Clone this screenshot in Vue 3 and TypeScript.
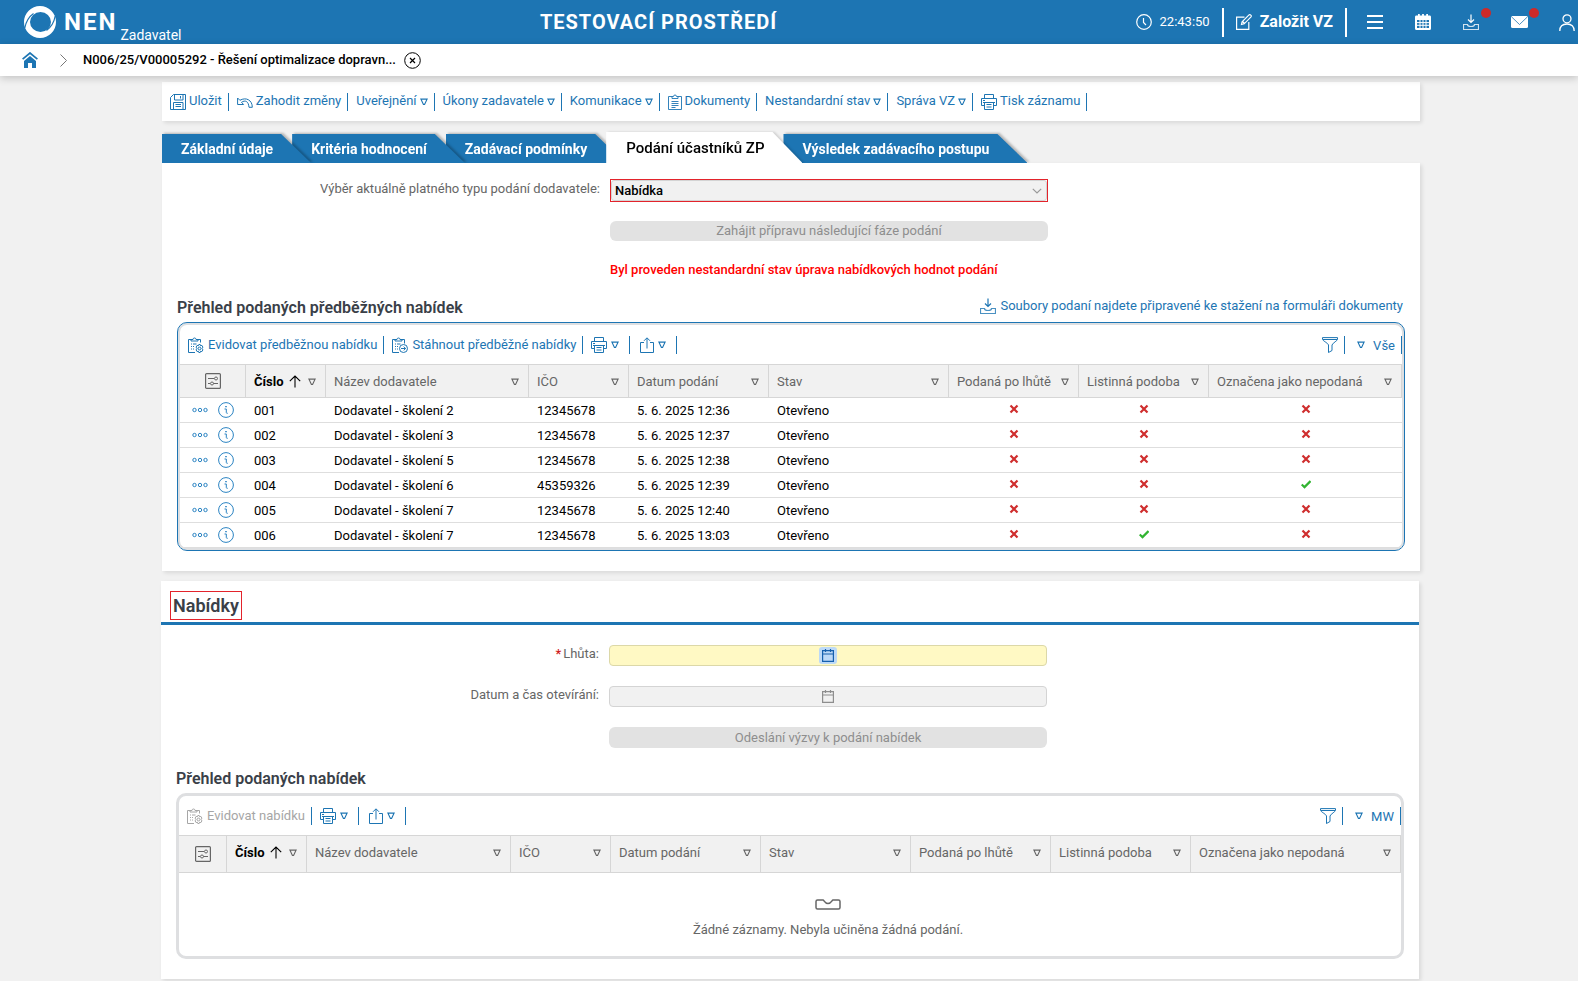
<script setup lang="ts">
import { ref } from 'vue'

interface MenuItem {
  label: string
  icon?: string
  menu?: boolean
}

interface Column {
  key: string
  label: string
  width?: number
  sorted?: boolean
}

interface Submission {
  no: string
  supplier: string
  ico: string
  date: string
  state: string
  late: boolean
  paper: boolean
  withdrawn: boolean
}

const menu: MenuItem[] = [
  { label: 'Uložit', icon: 'save' },
  { label: 'Zahodit změny', icon: 'undo' },
  { label: 'Uveřejnění', menu: true },
  { label: 'Úkony zadavatele', menu: true },
  { label: 'Komunikace', menu: true },
  { label: 'Dokumenty', icon: 'clipboard' },
  { label: 'Nestandardní stav', menu: true },
  { label: 'Správa VZ', menu: true },
  { label: 'Tisk záznamu', icon: 'print' },
]

const tabs = [
  'Základní údaje',
  'Kritéria hodnocení',
  'Zadávací podmínky',
  'Podání účastníků ZP',
  'Výsledek zadávacího postupu',
]
const activeTab = ref(3)

const makeColumns = (widths: number[]): Column[] => [
  { key: 'no', label: 'Číslo', width: widths[0], sorted: true },
  { key: 'supplier', label: 'Název dodavatele', width: widths[1] },
  { key: 'ico', label: 'IČO', width: widths[2] },
  { key: 'date', label: 'Datum podání', width: widths[3] },
  { key: 'state', label: 'Stav', width: widths[4] },
  { key: 'late', label: 'Podaná po lhůtě', width: widths[5] },
  { key: 'paper', label: 'Listinná podoba', width: widths[6] },
  { key: 'withdrawn', label: 'Označena jako nepodaná' },
]
const preliminaryColumns = makeColumns([80, 203, 100, 140, 180, 130, 130])
const offerColumns = makeColumns([80, 204, 100, 150, 150, 140, 140])

const row = (
  no: string,
  supplier: string,
  ico: string,
  time: string,
  paper = false,
  withdrawn = false,
): Submission => ({
  no,
  supplier: `Dodavatel - školení ${supplier}`,
  ico,
  date: `5. 6. 2025 ${time}`,
  state: 'Otevřeno',
  late: false,
  paper,
  withdrawn,
})
const rows: Submission[] = [
  row('001', '2', '12345678', '12:36'),
  row('002', '3', '12345678', '12:37'),
  row('003', '5', '12345678', '12:38'),
  row('004', '6', '45359326', '12:39', false, true),
  row('005', '7', '12345678', '12:40'),
  row('006', '7', '12345678', '13:03', true),
]

const submissionType = ref('Nabídka')
const deadline = ref('')
const openingDate = ref('')
</script>

<template>
  <svg class="sprite" aria-hidden="true">
    <symbol id="i-tri" viewBox="0 0 8 8"><path d="M.9 1.100h6.200L4.600 6.400H3.400z" fill="none" stroke="currentColor" stroke-width="1.100" /></symbol>
    <symbol id="i-save" viewBox="0 0 16 16"><path d="M3.500.5h12v15H.5v-12zM4.500.5v5.500h8.500v-5.500M10.500 2v2.500M3.500 15.500v-7h9.500v7M5.500 10.500h5.500M5.500 12.500h5.500" fill="none" stroke="currentColor" /></symbol>
    <symbol id="i-undo" viewBox="0 0 16 16"><path d="M.6 4v6.500h6L4.500 8.300C8 5.800 11.500 7 12 13.300h3.300C15.300 6 9 2.800 2.900 6.300z" fill="none" stroke="currentColor" stroke-linejoin="round" /></symbol>
    <symbol id="i-clipboard" viewBox="0 0 14 16"><path d="M4 2.500H.5v13h13v-13H10M4 4.500v-2h1.500a1.500 1.500 0 0 1 3 0H10v2zM3.500 7.500h7M3.500 9.500h7M3.500 11.500h7M3.500 13.500h4" fill="none" stroke="currentColor" stroke-width=".9" /></symbol>
    <symbol id="i-print" viewBox="0 0 16 16"><path d="M3.500 4.500v-4h9v4M3.500 11.500h-3v-7h15v7h-3M3.500 8.500h9v7h-9zM2 6.500h2M5.500 10.500h5M5.500 13h5M2 8.500h12" fill="none" stroke="currentColor" /></symbol>
    <symbol id="i-clipgear" viewBox="0 0 16 16"><g fill="none" stroke="currentColor"><path d="M3 2.500H.5v13H7M10 2.500h2.500v3M3 4V2.500h2a1.500 1.500 0 0 1 3 0h2V4zM3 7h1M5 7h3.500M3 9.500h1M5 9.500h1M3 12h1M5 12h1" /><circle cx="11.500" cy="11.500" r="1.400" /><path d="M10.800 7.500h1.400l.4 1.300 1.300-.4 1 1.700-.8 1.400.8 1.400-1 1.700-1.300-.4-.4 1.300h-1.400l-.4-1.300-1.300.4-1-1.700.8-1.400-.8-1.400 1-1.700 1.300.4z" /></g></symbol>
    <symbol id="i-cliparrow" viewBox="0 0 16 16"><g fill="none" stroke="currentColor"><path d="M3 2.500H.5v13H7M10 2.500h2.500v4M3 4V2.500h2a1.500 1.500 0 0 1 3 0h2V4zM3 7h1M5 7h3.500M3 9.500h1M5 9.500h1M3 12h1M5 12h1" /><circle cx="11.500" cy="11.500" r="4" /><path d="M9 11.500h4.500M11.700 9.600l1.900 1.900-1.900 1.900" /></g></symbol>
    <symbol id="i-share" viewBox="0 0 14 16"><path d="M4 5.500H.500v10h13v-10H10M7 11.500V1M4 3.800L7 .8l3 3" fill="none" stroke="currentColor" /></symbol>
    <symbol id="i-download" viewBox="0 0 16 16"><path d="M8 .5v7.500M5 5.500l3 3 3-3" fill="none" stroke="currentColor" stroke-width="1.200" /><path d="M4.500 10.500h-4v5h15v-5h-4c0 1.500-1.500 2-3.500 2s-3.500-.5-3.500-2z" fill="none" stroke="currentColor" stroke-width="1.200" opacity=".8" /></symbol>
    <symbol id="i-funnel" viewBox="0 0 16 16"><path d="M.5.600h15v1.400c0 2-4.500 3.500-5.500 6v5.500l-3.500 2V8C5.500 5.500.500 4 .500 2zM1 2.500h14" fill="none" stroke="currentColor" /></symbol>
    <symbol id="i-settings" viewBox="0 0 16 16"><g fill="none" stroke="currentColor"><rect x=".6" y=".6" width="14.800" height="14.800" rx="1" stroke-width="1.200" /><path d="M3 5.500h6M3 10.500h2M8.500 10.500H13" /><circle cx="11" cy="5.500" r="1.500" /><circle cx="7" cy="10.500" r="1.500" /></g></symbol>
    <symbol id="i-up" viewBox="0 0 12 13"><path d="M6 12.500V1.200M.8 6.200L6 1l5.200 5.200" fill="none" stroke="currentColor" stroke-width="1.100" /></symbol>
    <symbol id="i-dots" viewBox="0 0 16 6"><g fill="none" stroke="currentColor"><circle cx="2.500" cy="3" r="1.700" /><circle cx="8" cy="3" r="1.700" /><circle cx="13.500" cy="3" r="1.700" /></g></symbol>
    <symbol id="i-info" viewBox="0 0 16 16"><circle cx="8" cy="8" r="7.400" fill="none" stroke="currentColor" /><path d="M7.200 4.600h1.600" stroke="currentColor" stroke-width="1.400" /><path d="M6.500 7h1.800v3.500q0 1 1.400.8" fill="none" stroke="currentColor" /></symbol>
    <symbol id="i-no" viewBox="0 0 10 10"><path d="M1.500 1.500l7 7M8.500 1.500l-7 7" stroke="currentColor" stroke-width="2.200" /></symbol>
    <symbol id="i-yes" viewBox="0 0 10 10"><path d="M.7 5.500l2.800 2.600 6-6" fill="none" stroke="currentColor" stroke-width="2.200" /></symbol>
    <symbol id="i-cal" viewBox="0 0 12 13"><path d="M.6 1.600h10.800v10.800H.6zM.6 5h10.800M3.500 0v3M8.500 0v3" fill="none" stroke="currentColor" stroke-width="1.200" /></symbol>
    <symbol id="i-empty" viewBox="0 0 26 11"><path d="M2.500 1h5.500c1.200 0 1.500 3.500 5 3.500s3.800-3.500 5-3.500h5.500q1.500 0 1.500 1.500v6q0 1.500-1.500 1.500h-21q-1.500 0-1.500-1.500v-6q0-1.500 1.500-1.500z" fill="none" stroke="currentColor" stroke-width="1.500" /></symbol>
  </svg>

  <header class="topbar">
    <a class="brand" href="#">
      <svg class="logo" viewBox="0 0 32 32" aria-hidden="true">
        <path fill-rule="evenodd" d="M16 0a16 16 0 1 1 0 32a16 16 0 0 1 0-32zM16.500 6a10.500 10 0 1 0 0 20a10.500 10 0 0 0 0-20z" fill="#fff" />
        <path d="M.8 22Q2.500 12.500 9.500 7.500M31.200 10Q29.500 19.500 22.500 24.500" fill="none" stroke="#1d75b3" stroke-width="1.200" />
      </svg>
      <span class="name">NEN</span>
      <span class="role">Zadavatel</span>
    </a>
    <div class="env">TESTOVACÍ PROSTŘEDÍ</div>
    <div class="tools">
      <span class="clock">
        <svg width="16" height="16" viewBox="0 0 16 16" aria-hidden="true"><circle cx="8" cy="8" r="7.300" fill="none" stroke="currentColor" stroke-width="1.200" /><path d="M7.500 4v4.500L10 11" fill="none" stroke="currentColor" stroke-width="1.200" /></svg>
        22:43:50
      </span>
      <button class="create" type="button">
        <svg width="16" height="16" viewBox="0 0 16 16" aria-hidden="true"><path d="M8.500 3.200H.6v12.200h12.200V8M5.500 10.500l.6-2.800L13 .9q.8-.6 1.500 0l.5.500q.6.700 0 1.400L8.200 9.800zM6.500 7.500l2 2" fill="none" stroke="currentColor" stroke-width="1.200" /></svg>
        Založit VZ
      </button>
      <nav class="shortcuts" aria-label="Zkratky">
        <button type="button" aria-label="Menu"><svg width="16" height="14" viewBox="0 0 16 14"><path d="M0 1h16M0 7h16M0 13h16" stroke="currentColor" stroke-width="2" /></svg></button>
        <button type="button" aria-label="Kalendář"><svg width="16" height="16" viewBox="0 0 16 16"><path fill-rule="evenodd" fill="currentColor" d="M1 1.500H3V0h1.800v1.500h2.300V0h1.800v1.500h2.300V0H13v1.500h2Q16 1.500 16 3v11.500q0 1.500-1.500 1.500h-13Q0 16 0 14.500V3q0-1.500 1-1.500zM2 6v8h12V6z" /><path d="M2 8.600h12M2 11.300h12M5 6v8M8 6v8M11 6v8" stroke="currentColor" /></svg></button>
        <button type="button" aria-label="Stahování"><svg width="16" height="16"><use href="#i-download" /></svg><i class="dot"></i></button>
        <button type="button" aria-label="Zprávy"><svg width="17" height="12" viewBox="0 0 17 12"><rect width="17" height="12" rx="1.500" fill="currentColor" /><path d="M.5.800l8 7.700 8-7.700" fill="none" stroke="#1d75b3" stroke-width=".8" /></svg><i class="dot"></i></button>
        <button type="button" aria-label="Uživatel"><svg width="16" height="17" viewBox="0 0 16 17"><circle cx="8" cy="4.800" r="4" fill="none" stroke="currentColor" stroke-width="1.300" /><path d="M.8 17c0-4.500 2.700-7 7.200-7s7.200 2.500 7.200 7" fill="none" stroke="currentColor" stroke-width="1.300" /></svg></button>
      </nav>
    </div>
  </header>

  <nav class="crumbs" aria-label="Drobečková navigace">
    <a class="home" href="#" aria-label="Domů"><svg width="16" height="16" viewBox="0 0 16 16"><path d="M.6 7.200L8 1l7.400 6.200" fill="none" stroke="currentColor" stroke-width="1.700" /><path d="M2 9l6-5 6 5v7h-4v-5H6v5H2z" fill="currentColor" /></svg></a>
    <svg class="sep" width="7" height="13" viewBox="0 0 7 13" aria-hidden="true"><path d="M.5.500l6 6-6 6" fill="none" stroke="currentColor" /></svg>
    <a class="record" href="#">N006/25/V00005292 - Řešení optimalizace dopravn...</a>
    <button class="close" type="button" aria-label="Zavřít"><svg width="17" height="17" viewBox="0 0 17 17"><circle cx="8.500" cy="8.500" r="7.800" fill="none" stroke="currentColor" /><path d="M6 6l5 5M11 6l-5 5" stroke="currentColor" stroke-width="1.200" /></svg></button>
  </nav>

  <main class="page">
    <div class="card actions">
      <button v-for="item in menu" :key="item.label" class="action" type="button">
        <svg v-if="item.icon" :width="item.icon === 'clipboard' ? 14 : 16" height="16"><use :href="`#i-${item.icon}`" /></svg>
        <span>{{ item.label }}</span>
        <svg v-if="item.menu" class="tri" width="8" height="8"><use href="#i-tri" /></svg>
      </button>
    </div>

    <div class="tabs" role="tablist">
      <div
        v-for="(tab, i) in tabs"
        :key="tab"
        class="tab"
        :class="{ active: i === activeTab }"
        :style="{ zIndex: i === activeTab ? 10 : 9 - i }"
      >
        <button type="button" role="tab" :aria-selected="i === activeTab" @click="activeTab = i">{{ tab }}</button>
      </div>
    </div>

    <section class="card first">
      <div class="form">
        <label for="type">Výběr aktuálně platného typu podání dodavatele:</label>
        <div class="marked">
          <select id="type" v-model="submissionType">
            <option>Nabídka</option>
          </select>
          <svg class="chevron" width="10" height="6" viewBox="0 0 10 6" aria-hidden="true"><path d="M.8.800L5 5 9.200.800" fill="none" stroke="currentColor" stroke-width="1.200" /></svg>
        </div>
        <button class="wide" type="button" disabled>Zahájit přípravu následující fáze podání</button>
        <p class="warning">Byl proveden nestandardní stav úprava nabídkových hodnot podání</p>
      </div>

      <div class="heading">
        <h2>Přehled podaných předběžných nabídek</h2>
        <a href="#"><svg width="16" height="16" aria-hidden="true"><use href="#i-download" /></svg>Soubory podaní najdete připravené ke stažení na formuláři dokumenty</a>
      </div>

      <div class="frame selected">
        <div class="gridbar">
          <button class="action" type="button"><svg width="16" height="16"><use href="#i-clipgear" /></svg>Evidovat předběžnou nabídku</button>
          <button class="action" type="button"><svg width="16" height="16"><use href="#i-cliparrow" /></svg>Stáhnout předběžné nabídky</button>
          <button class="action short" type="button" aria-label="Tisk"><svg width="16" height="16"><use href="#i-print" /></svg><svg class="tri" width="8" height="8"><use href="#i-tri" /></svg></button>
          <button class="action short export" type="button" aria-label="Export"><svg width="14" height="16"><use href="#i-share" /></svg><svg class="tri" width="8" height="8"><use href="#i-tri" /></svg></button>
          <span class="fill"></span>
          <button class="action" type="button" aria-label="Filtr"><svg width="16" height="16"><use href="#i-funnel" /></svg></button>
          <button class="action view" type="button"><svg class="tri" width="8" height="8"><use href="#i-tri" /></svg><span>Vše</span></button>
        </div>
        <table>
          <colgroup>
            <col class="c-tools" />
            <col v-for="c in preliminaryColumns" :key="c.key" :style="{ width: c.width ? c.width + 'px' : 'auto' }" />
          </colgroup>
          <thead>
            <tr>
              <th class="tools-cell"><button type="button" aria-label="Nastavení sloupců"><svg width="16" height="16"><use href="#i-settings" /></svg></button></th>
              <th v-for="c in preliminaryColumns" :key="c.key" :class="{ sorted: c.sorted }">
                <div>{{ c.label }}<svg v-if="c.sorted" width="12" height="13"><use href="#i-up" /></svg><svg class="tri" width="8" height="8"><use href="#i-tri" /></svg></div>
              </th>
            </tr>
          </thead>
          <tbody>
            <tr v-for="r in rows" :key="r.no">
              <td class="row-tools">
                <div>
                  <button type="button" aria-label="Akce"><svg width="16" height="6"><use href="#i-dots" /></svg></button>
                  <button type="button" aria-label="Detail"><svg width="16" height="16"><use href="#i-info" /></svg></button>
                </div>
              </td>
              <td>{{ r.no }}</td>
              <td>{{ r.supplier }}</td>
              <td>{{ r.ico }}</td>
              <td>{{ r.date }}</td>
              <td>{{ r.state }}</td>
              <td v-for="(flag, i) in [r.late, r.paper, r.withdrawn]" :key="i" class="flag" :class="{ yes: flag }">
                <svg width="10" height="10" role="img" :aria-label="flag ? 'Ano' : 'Ne'"><use :href="flag ? '#i-yes' : '#i-no'" /></svg>
              </td>
            </tr>
          </tbody>
        </table>
      </div>
    </section>

    <section class="card offers">
      <h1><span>Nabídky</span></h1>
      <div class="form">
        <label for="deadline"><b>*</b>Lhůta:</label>
        <div class="date required">
          <input id="deadline" v-model="deadline" type="text" />
          <button type="button" aria-label="Vybrat datum lhůty"><svg width="12" height="13"><use href="#i-cal" /></svg></button>
        </div>
        <label for="opening">Datum a čas otevírání:</label>
        <div class="date">
          <input id="opening" v-model="openingDate" type="text" disabled />
          <button type="button" disabled aria-label="Vybrat datum otevírání"><svg width="12" height="13"><use href="#i-cal" /></svg></button>
        </div>
        <button class="wide" type="button" disabled>Odeslání výzvy k podání nabídek</button>
      </div>

      <div class="heading"><h2>Přehled podaných nabídek</h2></div>

      <div class="frame">
        <div class="gridbar">
          <button class="action" type="button" disabled><svg width="16" height="16"><use href="#i-clipgear" /></svg>Evidovat nabídku</button>
          <button class="action short" type="button" aria-label="Tisk"><svg width="16" height="16"><use href="#i-print" /></svg><svg class="tri" width="8" height="8"><use href="#i-tri" /></svg></button>
          <button class="action short export" type="button" aria-label="Export"><svg width="14" height="16"><use href="#i-share" /></svg><svg class="tri" width="8" height="8"><use href="#i-tri" /></svg></button>
          <span class="fill"></span>
          <button class="action" type="button" aria-label="Filtr"><svg width="16" height="16"><use href="#i-funnel" /></svg></button>
          <button class="action view" type="button"><svg class="tri" width="8" height="8"><use href="#i-tri" /></svg><span>MW</span></button>
        </div>
        <table class="tall">
          <colgroup>
            <col class="c-tools" />
            <col v-for="c in offerColumns" :key="c.key" :style="{ width: c.width ? c.width + 'px' : 'auto' }" />
          </colgroup>
          <thead>
            <tr>
              <th class="tools-cell"><button type="button" aria-label="Nastavení sloupců"><svg width="16" height="16"><use href="#i-settings" /></svg></button></th>
              <th v-for="c in offerColumns" :key="c.key" :class="{ sorted: c.sorted }">
                <div>{{ c.label }}<svg v-if="c.sorted" width="12" height="13"><use href="#i-up" /></svg><svg class="tri" width="8" height="8"><use href="#i-tri" /></svg></div>
              </th>
            </tr>
          </thead>
        </table>
        <div class="empty">
          <svg width="26" height="11" aria-hidden="true"><use href="#i-empty" /></svg>
          <p>Žádné záznamy. Nebyla učiněna žádná podání.</p>
        </div>
      </div>
    </section>
  </main>
</template>

<style>
body {
  background: #f1f1f1;
  font: 13px/16px Roboto, "Noto Sans", sans-serif;
  color: #000;
}
</style>

<style scoped>
* {
  box-sizing: border-box;
}
button,
input,
select {
  font: inherit;
  color: inherit;
}
button {
  padding: 0;
  border: 0;
  background: none;
  cursor: pointer;
}
button:disabled {
  cursor: default;
}
a {
  color: inherit;
  text-decoration: none;
}
svg {
  flex: none;
  display: block;
}
h1,
h2,
p {
  margin: 0;
}
.sprite {
  position: absolute;
  width: 0;
  height: 0;
}

/* top bar */
.topbar {
  display: flex;
  justify-content: space-between;
  height: 44px;
  padding-left: 24px;
  background: #1d75b3;
  color: #fff;
}
.brand {
  display: flex;
  align-items: center;
}
.logo {
  width: 32px;
  height: 32px;
}
.name {
  margin-left: 8px;
  font-size: 24px;
  line-height: 28px;
  font-weight: 700;
  letter-spacing: 2px;
}
.role {
  align-self: flex-end;
  margin-left: 3px;
  font-size: 14px;
  line-height: 18px;
}
.env {
  align-self: center;
  font-size: 20px;
  line-height: 24px;
  font-weight: 700;
  letter-spacing: 1px;
}
.tools {
  display: flex;
  align-items: center;
}
.clock,
.create {
  display: flex;
  align-items: center;
  gap: 8px;
  height: 29px;
  padding-right: 12px;
  border-right: 2px solid #fff;
}
.create {
  padding-left: 12px;
  font-size: 16px;
  font-weight: 700;
}
.shortcuts {
  display: flex;
  padding-left: 4px;
  margin-right: -13px;
}
.shortcuts button {
  position: relative;
  display: grid;
  place-items: center;
  width: 48px;
  height: 44px;
}
.dot {
  position: absolute;
  top: 8px;
  right: 4px;
  width: 10px;
  height: 10px;
  border-radius: 50%;
  background: #cc2a2a;
}

/* breadcrumb */
.crumbs {
  position: relative;
  display: flex;
  align-items: center;
  height: 32px;
  padding-left: 22px;
  background: #fff;
  box-shadow: 0 2px 8px rgba(0, 0, 0, 0.2);
}
.home {
  color: #1d75b3;
}
.sep {
  margin: 0 16px 0 22px;
  color: #777;
}
.record {
  font-weight: 500;
}
.close {
  margin-left: 8px;
}

/* page frame */
.page {
  padding: 6px 158px 2px 162px;
}
.card {
  background: #fff;
  box-shadow: 2px 2px 4px rgba(0, 0, 0, 0.1);
}
.actions {
  display: flex;
  align-items: center;
  height: 39px;
}
.action {
  display: flex;
  align-items: center;
  gap: 4px;
  height: 18px;
  padding: 0 6px 0 8px;
  border-right: 1px solid #1d75b3;
  color: #1d75b3;
  white-space: nowrap;
}
.actions .action {
  gap: 3px;
}
.actions span {
  padding-bottom: 2px;
}
.action:disabled {
  color: #a6a6a6;
}

/* tabs */
.tabs {
  display: flex;
  align-items: flex-end;
  height: 42px;
  overflow: hidden;
}
.tab {
  position: relative;
  filter: drop-shadow(2px -1px 1px rgba(0, 0, 0, 0.25));
}
.tab.active {
  filter: drop-shadow(2px 0 1px rgba(0, 0, 0, 0.15));
}
.tab + .tab {
  margin-left: -19px;
}
.tab button {
  height: 29px;
  padding: 0 38px 0 19px;
  background: #1d75b3;
  color: #fff;
  font-size: 14px;
  font-weight: 700;
  clip-path: polygon(0 0, calc(100% - 30px) 0, 100% 100%, 0 100%);
}
.tab.active button {
  height: 31px;
  padding-left: 20px;
  background: #fff;
  color: #000;
  font-size: 15px;
  font-weight: 500;
}

/* first section */
.first {
  height: 408px;
  padding: 16px 15px 0;
}
.form {
  display: grid;
  grid-template-columns: 448fr 438fr 372fr;
  margin: 0 -15px;
}
.form label {
  grid-column: 1;
  padding: 2px 10px 0 0;
  text-align: right;
  color: #666;
}
.form label b {
  margin-right: 2px;
  color: #d01c1c;
  font-weight: 500;
}
.marked {
  position: relative;
  height: 23px;
  border: 1px solid #e3232b;
}
.marked select {
  display: block;
  width: 100%;
  height: 21px;
  padding: 0 3px;
  border: 1px solid #d4d4d4;
  border-radius: 3px;
  background: #f1f1f1;
  appearance: none;
  font-weight: 500;
}
.chevron {
  position: absolute;
  right: 5px;
  top: 8px;
  color: #999;
  pointer-events: none;
}
.wide {
  grid-column: 2;
  height: 20px;
  margin-top: 19px;
  border-radius: 6px;
  background: #e2e2e2;
  color: #8e8e8e;
}
.warning {
  grid-column: 2;
  margin-top: 21px;
  color: #f00;
  font-weight: 500;
  white-space: nowrap;
}
.heading {
  display: flex;
  justify-content: space-between;
  align-items: center;
  color: #1d75b3;
}
.first .heading {
  margin: 19px 0 4px;
}
.heading h2 {
  color: #3a4048;
  font-size: 16px;
  line-height: 21px;
  font-weight: 600;
}
.heading a {
  display: flex;
  align-items: center;
  gap: 4px;
  padding: 0 2px 4px 0;
}

/* data grids */
.frame {
  border: 3px solid #dedfe1;
  border-radius: 10px;
  background: #fff;
  overflow: hidden;
}
.frame.selected {
  padding: 2px;
  border: 1px solid #1d75b3;
  box-shadow: inset 0 0 0 2px #dedfe1;
}
.gridbar {
  display: flex;
  align-items: center;
  height: 39px;
}
.gridbar .fill {
  flex: 1;
}
.action.short {
  padding-right: 10px;
}
.action.export {
  padding-left: 10px;
}
.action.view {
  gap: 8px;
  padding-left: 12px;
}
.action.view span {
  padding-top: 2px;
}
table {
  width: 100%;
  table-layout: fixed;
  border-spacing: 0;
}
.c-tools {
  width: 66px;
}
.tall .c-tools {
  width: 48px;
}
th {
  height: 34px;
  padding: 0 9px 0 8px;
  border: solid #d6d6d6;
  border-width: 1px 1px 1px 0;
  background: #f1f1f1;
  color: #666;
  font-weight: 400;
  text-align: left;
}
.tall th {
  height: 38px;
}
th div {
  display: flex;
  align-items: center;
  padding-top: 1px;
  white-space: nowrap;
}
.tall th div {
  padding: 0 0 3px;
}
th .tri {
  margin-left: auto;
}
th.sorted {
  color: #000;
  font-weight: 700;
}
th.sorted svg:not(.tri) {
  margin-left: 5px;
}
th.sorted .tri {
  color: #666;
}
th.tools-cell {
  padding: 0;
}
.tools-cell button {
  display: block;
  margin: 0 auto;
}
td {
  height: 25px;
  padding: 2px 8px 0;
  border-bottom: 1px solid #dedede;
  white-space: nowrap;
}
td.row-tools {
  padding: 0 12px;
}
.row-tools div {
  display: flex;
  align-items: center;
  justify-content: space-between;
  color: #2a83c2;
}
td.flag {
  padding: 0;
  color: #cf2e2e;
}
td.flag svg {
  margin: -2px auto 0;
}
td.yes {
  color: #32b432;
}

/* offers section */
.offers {
  height: 398px;
  margin: 10px 1px 0 -1px;
  padding: 0 15px;
}
h1 {
  margin: 0 -15px 20px;
  padding: 10px 9px 2px;
  border-bottom: 3px solid #1d75b3;
  color: #3a4048;
  font-size: 18px;
  line-height: 27px;
  font-weight: 600;
}
h1 span {
  display: inline-block;
  padding: 0 2px;
  border: 1px solid #e3232b;
}
.offers label {
  padding-top: 1px;
}
.date {
  position: relative;
  margin-bottom: 20px;
}
.date input {
  display: block;
  width: 100%;
  height: 21px;
  border: 1px solid #d4d4d4;
  border-radius: 4px;
  background: #f1f1f1;
}
.date.required input {
  border-color: #dcd8a8;
  background: #fff9c4;
}
.date button {
  position: absolute;
  inset: 2px 0;
  display: grid;
  place-items: center;
  width: 18px;
  margin: 0 auto;
  border-radius: 3px;
  color: #8e8e8e;
}
.date.required button {
  background: #bcd9f7;
  color: #1560ad;
}
.offers .wide {
  height: 21px;
  margin-top: 0;
}
.offers .heading {
  margin: 20px 0 4px;
}
.empty {
  display: flex;
  flex-direction: column;
  align-items: center;
  gap: 12px;
  height: 83px;
  padding: 26px 0 0 76px;
  color: #666;
}
</style>
